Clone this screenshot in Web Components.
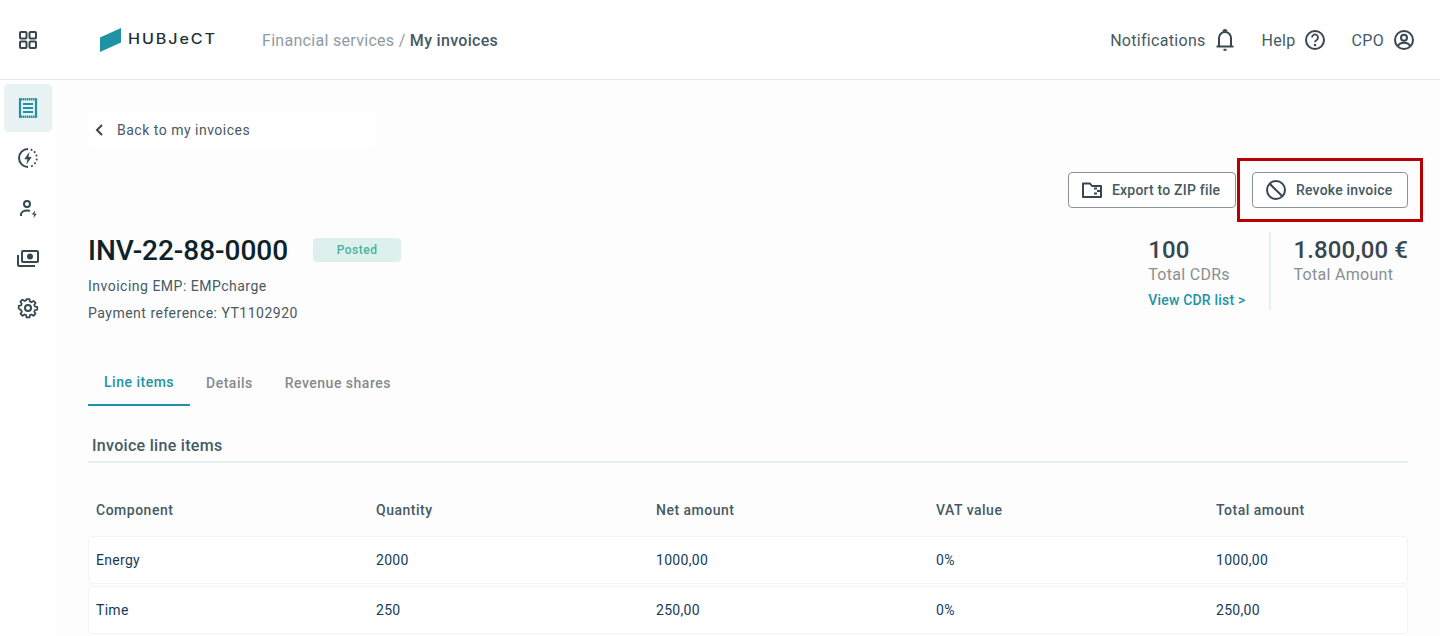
<!DOCTYPE html>
<html lang="en"><head><meta charset="utf-8"><title>My invoices</title>
<style>
html,body{margin:0;height:636px;overflow:hidden;background:#fdfdfd;font-family:Roboto,"Liberation Sans",sans-serif;color:#37474f}
</style></head><body>
<app-shell>
  <top-bar slot="top"></top-bar>
  <side-rail slot="rail"></side-rail>
  <invoice-page slot="main"></invoice-page>
</app-shell>
<script>
const def=(name,html)=>customElements.define(name,class extends HTMLElement{constructor(){super();this.attachShadow({mode:'open'}).innerHTML=html;}});
def('app-shell',`<style>:host{display:grid;grid-template-columns:56px 1fr;grid-template-rows:80px 556px;width:1440px;height:636px}
::slotted([slot=top]){grid-column:1/3}</style><slot name="top"></slot><slot name="rail"></slot><slot name="main"></slot>`);

def('top-bar',`<style>:host{display:flex;align-items:center;height:79px;border-bottom:1px solid #e8eaea;background:#fff;font-size:16px;letter-spacing:.3px;color:#455a64}
.grid{width:56px;display:flex;justify-content:center}
.logo{display:flex;align-items:center;margin-left:44px;width:162px;gap:7px}
.word{display:inline-block;font:500 14px Inter,sans-serif;letter-spacing:1.66px;color:#1d2f38;line-height:16px;margin-top:-1px;transform:scaleX(1.15);transform-origin:left center}
.crumb{color:#8d9ba3;margin-top:1px}.crumb b{font-weight:500;color:#455a64}
.right{margin-left:auto;display:flex;align-items:center;margin-right:25px}
.it{display:flex;align-items:center;gap:8px}.it span{margin-top:1px}svg{display:block}
</style>
<div class="grid"><svg width="20" height="20" viewBox="0 0 20 20" fill="none" stroke="#37474f" stroke-width="2"><rect x="2" y="2" width="6.5" height="6.5" rx="1"/><rect x="11.5" y="2" width="6.5" height="6.5" rx="1"/><rect x="2" y="11.5" width="6.5" height="6.5" rx="1"/><rect x="11.5" y="11.5" width="6.5" height="6.5" rx="1"/></svg></div>
<div class="logo"><svg width="21" height="24" viewBox="0 0 21 24"><path fill="#1f93a5" d="M0 9.500L21 0V14.500L0 24Z"/></svg><span class="word">HUBJeCT</span></div>
<div class="crumb">Financial services / <b>My invoices</b></div>
<div class="right">
<div class="it" style="margin-right:26px"><span>Notifications</span><svg width="22" height="24" viewBox="0 0 22 24" fill="none" stroke="#37474f" stroke-width="2"><path d="M5 18.500V10a6 6 0 0 1 12 0V18.500"/><path d="M2.500 18.500H19.500"/><path d="M9.500 3.500a1.500 1.500 0 0 1 3 0"/><path d="M9.500 21.800h3"/></svg></div>
<div class="it" style="margin-right:26px"><span>Help</span><svg width="22" height="22" viewBox="0 0 22 22" fill="none" stroke="#37474f" stroke-width="2"><circle cx="11" cy="11" r="9"/><path d="M8 8.500a3 3 0 1 1 4.700 2.400c-1 .7-1.700 1.200-1.700 2.400" stroke-width="1.800"/><circle cx="11" cy="16" r=".6" stroke-width="1.400"/></svg></div>
<div class="it" style="gap:9px"><span>CPO</span><svg width="22" height="22" viewBox="0 0 22 22" fill="none" stroke="#37474f" stroke-width="2"><circle cx="11" cy="11" r="9"/><circle cx="11" cy="8.800" r="3"/><path d="M5 17c1-2.500 3.500-3.200 6-3.200s5 .7 6 3.200"/></svg></div>
</div>`);

def('side-rail',`<style>:host{display:flex;flex-direction:column;align-items:center;background:#fff;padding-top:4px;gap:2px}
.b{width:48px;height:48px;border-radius:4px;display:flex;align-items:center;justify-content:center}
.on{background:#e9f3f3}svg{display:block}</style>
<div class="b on"><svg width="20" height="20" viewBox="0 0 20 20" fill="none" stroke="#1f93a5"><path d="M2 .5V19.500M18 .5V19.500" stroke-width="2.200"/><path d="M1 1.200H19M1 18.800H19" stroke-width="2.400" stroke-dasharray="1.500 .5"/><path d="M5 6H15M5 10H15M5 14H15" stroke-width="2"/></svg></div>
<div class="b"><svg width="22" height="22" viewBox="0 0 22 22" fill="none" stroke="#37474f" stroke-width="2"><path d="M11 2a9 9 0 1 0 0 18"/><path d="M14.500 2.800l.1.1M17.600 5l.1.1M19.400 8.500v.1M19.700 12.500v.1M18 16.200l-.1.1M15 19l-.1.1" stroke-linecap="round"/><path d="M12.500 4.800L7.200 12.200h3.200l-1 5.200 5.300-7.400h-3.200z" fill="#37474f" stroke="none"/></svg></div>
<div class="b"><svg width="22" height="22" viewBox="0 0 22 22" fill="none" stroke="#37474f" stroke-width="2"><circle cx="10" cy="7" r="3"/><path d="M4 19v-1.500c0-2.500 3-4 6-4 1 0 2 .1 3 .4"/><path d="M18 13.500l-3.200 4h2.300l-.6 3.500 3.300-4.200h-2.300z" fill="#37474f" stroke="none"/></svg></div>
<div class="b"><svg width="24" height="24" viewBox="0 0 24 24" fill="none" stroke="#37474f" stroke-width="2"><rect x="6" y="5" width="16" height="11" rx="1"/><circle cx="14" cy="10.500" r="3" fill="#37474f" stroke="none"/><path d="M2 9v10a1 1 0 0 0 1 1h16"/></svg></div>
<div class="b"><svg width="24" height="24" viewBox="0 0 24 24" fill="none" stroke="#37474f" stroke-width="2" stroke-linejoin="round"><circle cx="12" cy="12" r="3"/><path d="M10.300 3h3.400l.5 2.700 1.800.8 2.300-1.600 2.400 2.400-1.600 2.300.8 1.800 2.700.5v3.200l-2.700.5-.8 1.800 1.600 2.300-2.400 2.400-2.300-1.600-1.800.8-.5 2.700h-3.400l-.5-2.700-1.800-.8-2.300 1.600-2.400-2.400 1.600-2.300-.8-1.800L1.300 13.700v-3.200l2.700-.5.800-1.800-1.600-2.300 2.400-2.400 2.300 1.600 1.800-.8z" transform="translate(1.600 .6) scale(.87)"/></svg></div>`);

def('action-button',`<style>:host{display:inline-flex;align-items:center;height:36px;border:1px solid #8a9499;border-radius:4px;background:#fff;font-size:14px;font-weight:500;letter-spacing:.2px;color:#455a64;position:relative;white-space:nowrap}
:host([mark])::after{content:"";position:absolute;left:-16px;right:-16px;top:-15px;bottom:-15px;border:3px solid #b90000;box-sizing:border-box;pointer-events:none}
::slotted(svg){display:block;flex:none}</style><slot></slot>`);

def('summary-stat',`<style>:host{display:block;color:#37474f}
.n{font-size:24px;font-weight:500;line-height:28px;letter-spacing:.1px;margin-bottom:1px}
.l{font-size:16px;line-height:20px;color:#8a8f92;letter-spacing:.3px}
::slotted(a){display:block;margin-top:7px;font-size:14px;line-height:16px;font-weight:500;letter-spacing:.2px;color:#1f93a5;text-decoration:none}
</style><div class="n"><slot name="n"></slot></div><div class="l"><slot name="l"></slot></div><slot></slot>`);

def('data-row',`<style>:host{display:grid;grid-template-columns:repeat(4,280px) 1fr;align-items:center;padding-left:8px;font-size:14px;letter-spacing:.3px;box-sizing:border-box;height:48px;margin-bottom:2px}
:host([head]){font-weight:500;letter-spacing:.5px;color:#455a64}
:host(:not([head])){background:#fff;border:1px solid #f3f5f5;border-radius:4px;padding-left:7px;color:#173a5a}</style><slot></slot>`);

def('invoice-page',`<style>:host{display:block;padding:32px 32px 0;background:#fdfdfd;height:524px;overflow:hidden;position:relative}
svg{display:block}
.back{display:flex;align-items:center;height:36px;width:288px;background:#fff;border-radius:4px;font-size:14px;letter-spacing:.5px;color:#455a64;padding-left:4px;box-sizing:border-box;gap:9px}
.acts{display:flex;justify-content:flex-end;gap:16px;margin-top:24px;height:36px}
.b1{width:168px;box-sizing:border-box;padding-left:13px;gap:10px}.b2{width:156px;box-sizing:border-box;padding-left:11px;gap:8px}
.info{display:flex;justify-content:space-between;margin-top:24px;height:78px}
.lead{padding-top:1px}
.title{display:flex;align-items:flex-start;height:35px}
h1{margin:1px 0 0;font-size:28px;font-weight:500;letter-spacing:-.04px;color:#0e2329;line-height:34px}
.tag{margin:5px 0 0 25px;width:88px;height:24px;border-radius:4px;background:#def0ee;color:#48b49c;font-size:12px;font-weight:500;letter-spacing:.5px;display:flex;align-items:center;justify-content:center}
.meta{font-size:14px;letter-spacing:.5px;line-height:27px;color:#455a64;margin-top:5px}
.stats{display:flex}
.s1{padding-right:23px;border-right:2px solid #e3eff1;padding-top:4px}
.s2{padding-left:23px;padding-top:4px}
.tabs{display:flex;margin-top:50px;height:46px;font-size:14px;font-weight:500;letter-spacing:.5px;color:#858a8d}
.tab{padding:0 16px;display:flex;align-items:center;height:46px;box-sizing:border-box}
.tab.on{color:#1f93a5;border-bottom:2px solid #1f93a5}
.sec{margin-top:26px;height:29px;border-bottom:2px solid #e3eff1;padding-left:4px;font-size:16px;font-weight:500;letter-spacing:.3px;color:#455a64;line-height:28px}
.rows{margin-top:23px}
</style>
<div class="back"><svg width="16" height="16" viewBox="0 0 16 16" fill="none" stroke="#37474f" stroke-width="2"><path d="M10 3L5 8l5 5"/></svg><span>Back to my invoices</span></div>
<div class="acts">
<action-button class="b1"><svg width="20" height="16" viewBox="0 0 20 16" fill="none" stroke="#37474f" stroke-width="2"><path d="M1 1.500H8L10 4H19V15H1Z" stroke-linejoin="round"/><path d="M12 6.500h3M15 9h3M12 11.500h3" stroke-width="2"/></svg><span>Export to ZIP file</span></action-button>
<action-button class="b2" mark><svg width="24" height="24" viewBox="0 0 24 24" fill="none" stroke="#37474f" stroke-width="2"><circle cx="12" cy="12" r="9"/><path d="M5.700 5.700L18.300 18.300"/></svg><span>Revoke invoice</span></action-button>
</div>
<div class="info">
<div class="lead"><div class="title"><h1>INV-22-88-0000</h1><span class="tag">Posted</span></div>
<div class="meta">Invoicing EMP: EMPcharge<br>Payment reference: YT1102920</div></div>
<div class="stats">
<summary-stat class="s1"><span slot="n">100</span><span slot="l">Total CDRs</span><a>View CDR list &gt;</a></summary-stat>
<summary-stat class="s2"><span slot="n">1.800,00 €</span><span slot="l">Total Amount</span></summary-stat>
</div></div>
<div class="tabs"><div class="tab on">Line items</div><div class="tab">Details</div><div class="tab">Revenue shares</div></div>
<div class="sec">Invoice line items</div>
<div class="rows">
<data-row head><span>Component</span><span>Quantity</span><span>Net amount</span><span>VAT value</span><span>Total amount</span></data-row>
<data-row><span>Energy</span><span>2000</span><span>1000,00</span><span>0%</span><span>1000,00</span></data-row>
<data-row><span>Time</span><span>250</span><span>250,00</span><span>0%</span><span>250,00</span></data-row>
</div>`);
</script>
</body></html>
